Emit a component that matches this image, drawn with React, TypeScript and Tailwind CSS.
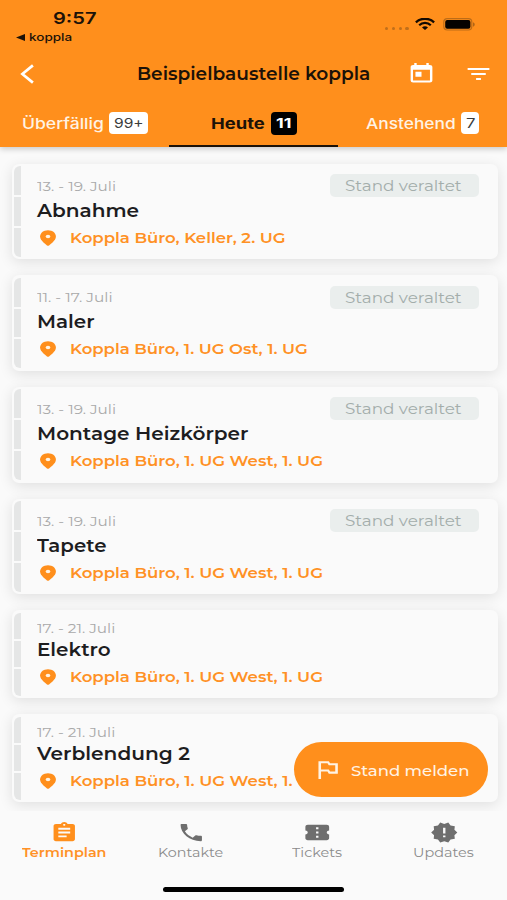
import { useLayoutEffect, useRef, type ReactNode } from "react";
import {
  MdAssignment,
  MdConfirmationNumber,
  MdFilterList,
  MdNewReleases,
  MdOutlinedFlag,
  MdPhone,
  MdToday,
} from "react-icons/md";

/** A single line of text, stretched horizontally to fill the width of its box. */
function Line({ children, className }: { children: ReactNode; className: string }) {
  const box = useRef<HTMLSpanElement>(null);
  const text = useRef<HTMLSpanElement>(null);
  useLayoutEffect(() => {
    const fit = () => {
      if (!box.current || !text.current) return;
      const scale = box.current.clientWidth / text.current.offsetWidth;
      text.current.style.transform = `scaleX(${scale})`;
    };
    fit();
    document.fonts.ready.then(fit);
  }, []);
  return (
    <span ref={box} className={`block shrink-0 whitespace-nowrap ${className}`}>
      <span ref={text} className="inline-block origin-left">
        {children}
      </span>
    </span>
  );
}

function Pin() {
  return (
    <svg className="h-[16px] w-[16px] shrink-0" viewBox="0 0 16 16" fill="none">
      <path
        d="M8 .2C3.300.2.100 3 .100 6.600c0 2.200 1.300 3.900 3.200 5.600l3.700 3.300q1 .7 2 0l3.700-3.300c1.900-1.700 3.200-3.400 3.200-5.600C15.900 3 12.700.2 8 .2Z"
        fill="#ff8f1c"
      />
      <ellipse cx="8" cy="6.500" rx="2.300" ry="1.700" fill="#fff3e2" />
    </svg>
  );
}

type Task = {
  date: string;
  dateWidth: string;
  title: string;
  titleWidth: string;
  place: string;
  placeWidth: string;
  outdated: boolean;
};

const west = { place: "Koppla Büro, 1. UG West, 1. UG", placeWidth: "w-[253px]" };
const mid = { date: "13. - 19. Juli", dateWidth: "w-[79px]" };
const late = { date: "17. - 21. Juli", dateWidth: "w-[78px]", outdated: false };

const tasks: Task[] = [
  { ...mid, title: "Abnahme", titleWidth: "w-[102px]", place: "Koppla Büro, Keller, 2. UG", placeWidth: "w-[215px]", outdated: true },
  { date: "11. - 17. Juli", dateWidth: "w-[75px]", title: "Maler", titleWidth: "w-[58px]", place: "Koppla Büro, 1. UG Ost, 1. UG", placeWidth: "w-[238px]", outdated: true },
  { ...mid, title: "Montage Heizkörper", titleWidth: "w-[212px]", ...west, outdated: true },
  { ...mid, title: "Tapete", titleWidth: "w-[70px]", ...west, outdated: true },
  { ...late, title: "Elektro", titleWidth: "w-[74px]", ...west },
  { ...late, title: "Verblendung 2", titleWidth: "w-[153px]", ...west },
];

function Card({ task }: { task: Task }) {
  const tall = task.outdated;
  return (
    <article
      className={`flex shrink-0 rounded-[7px] bg-[#fafafa] shadow-[0_3px_14px_rgba(0,0,0,0.11)] ${
        tall ? "h-[95.7px]" : "h-[88px]"
      }`}
    >
      <div className="my-[2.500px] ml-[2px] flex w-[7px] flex-col gap-[2px] overflow-hidden rounded-l-[6px]">
        <i className="flex-1 bg-[#e5e6e6]" />
        <i className="flex-1 bg-[#e5e6e6]" />
        <i className="flex-1 bg-[#e5e6e6]" />
      </div>
      <div className={`ml-[15.500px] flex flex-1 flex-col ${tall ? "pt-[12.300px]" : "pt-[8px]"}`}>
        <Line className={`h-[20px] text-[13.500px] leading-[20px] text-[#a9a9a9] ${task.dateWidth}`}>{task.date}</Line>
        <Line
          className={`h-[24px] text-[17.500px] leading-[24px] font-semibold text-[#1d1d1f] ${
            tall ? "mt-[3px]" : "-mt-[0.500px]"
          } ${task.titleWidth}`}
        >
          {task.title}
        </Line>
        <div className="mt-[5px] ml-[3.500px] flex h-[20px] items-center gap-[13.500px]">
          <Pin />
          <Line className={`text-[14px] leading-[20px] font-semibold text-[#ff9125] ${task.placeWidth}`}>
            {task.place}
          </Line>
        </div>
      </div>
      {tall && (
        <div className="mt-[10.500px] mr-[19px] -ml-[200px] flex h-[23px] w-[149px] items-center rounded-[5px] bg-[#eaeeed] pl-[15px]">
          <Line className="mt-px w-[117px] text-[14.500px] leading-[22px] text-[#a3adab]">Stand veraltet</Line>
        </div>
      )}
    </article>
  );
}

function Header() {
  return (
    <header className="relative z-10 flex h-[147px] shrink-0 flex-col bg-[#ff8f1c] text-[#1c1208] shadow-[0_2px_6px_rgba(0,0,0,0.2)]">
      <div className="flex h-[30px] items-start pt-[8px] font-['Inter',sans-serif]">
        <Line className="ml-[53px] w-[44px] text-[16px] leading-[21px] font-semibold">9:57</Line>
        <div className="mt-[19px] ml-[288px] flex gap-[3.400px]">
          <i className="size-[3.400px] rounded-full bg-[#c06f1b]" />
          <i className="size-[3.400px] rounded-full bg-[#c06f1b]" />
          <i className="size-[3.400px] rounded-full bg-[#c06f1b]" />
          <i className="size-[3.400px] rounded-full bg-[#c06f1b]" />
        </div>
        <svg className="mt-[10px] ml-[6px] h-[12px] w-[20px]" viewBox="0 0 20 12" fill="none" stroke="#120a02">
          <path d="M.9 4.300C5.800-.4 14.200-.4 19.100 4.300" strokeWidth="2.300" />
          <path d="M4.200 7.200c3.200-3.100 8.400-3.100 11.600 0" strokeWidth="2.200" />
          <path d="M7 9.400c1.700-1.500 4.300-1.500 6 0l-3 2.600Z" fill="#120a02" stroke="none" />
        </svg>
        <svg className="mt-[10px] ml-[8px] h-[13px] w-[33px]" viewBox="0 0 33 13" fill="none">
          <rect x=".8" y=".6" width="28" height="11.400" rx="3.500" stroke="#bd6c17" strokeWidth="1.200" />
          <rect x="2.200" y="1.900" width="25.200" height="8.900" rx="2" fill="#050200" />
          <path d="M30 4.300c2.300.8 2.300 3.600 0 4.400Z" fill="#b06517" />
        </svg>
      </div>
      <div className="flex h-[14px] items-center font-['Inter',sans-serif]">
        <svg className="ml-[16px] h-[7px] w-[9px]" viewBox="0 0 9 7">
          <path d="M0 3.500 9 0v7Z" fill="#1c1208" />
        </svg>
        <Line className="ml-[4px] w-[43px] text-[11px] leading-[14px] font-medium">koppla</Line>
      </div>
      <div className="mt-[8px] flex h-[44px] items-center">
        <svg className="ml-[20px] h-[20px] w-[15px]" viewBox="0 0 15 20" fill="none">
          <path d="M12.900 1.400 2.400 10l10.500 8.600" stroke="#fff" strokeWidth="2.700" />
        </svg>
        <Line className="ml-[101.500px] w-[233px] text-[17.500px] leading-[24px] font-semibold">
          Beispielbaustelle koppla
        </Line>
        <MdToday preserveAspectRatio="none" className="ml-[37.500px] h-[23.500px] w-[29px] text-white" />
        <MdFilterList preserveAspectRatio="none" className="ml-[28px] h-[24px] w-[29px] text-white" />
      </div>
      <nav className="mt-[5px] flex flex-1 font-['Inter',sans-serif] text-[15px] leading-[22px]">
        <div className="flex h-[45px] w-[169px] items-center pl-[22px] text-[#fff3e4]">
          <Line className="mt-[2px] w-[82px] font-medium">Überfällig</Line>
          <div className="ml-[5px] flex h-[22.500px] w-[39px] items-center justify-center rounded-[4px] bg-white text-[#3b3b3b]">
            <Line className="w-[30px] text-[13.500px]">99+</Line>
          </div>
        </div>
        <div className="flex h-[46.500px] w-[169px] items-center border-b-[2.500px] border-[#1c1208] pt-[1px] pl-[42px]">
          <Line className="mt-[2px] w-[54px] font-bold">Heute</Line>
          <div className="ml-[6px] flex h-[22.500px] w-[26px] items-center justify-center rounded-[4px] bg-black text-white">
            <Line className="w-[16px] text-[13.500px] font-bold">11</Line>
          </div>
        </div>
        <div className="flex h-[45px] items-center pl-[28px] text-[#fff3e4]">
          <Line className="mt-[2px] w-[90px] font-medium">Anstehend</Line>
          <div className="ml-[5px] flex h-[22.500px] w-[18px] items-center justify-center rounded-[4px] bg-white text-[#3b3b3b]">
            <Line className="w-[9px] text-[13px]">7</Line>
          </div>
        </div>
      </nav>
    </header>
  );
}

function BottomNav() {
  const icon = "h-[23px] w-[28.500px] text-[#6e6e6e]";
  const label = "text-[13px] leading-[16px] text-[#8b8b8b]";
  return (
    <footer className="relative z-10 flex h-[89px] shrink-0 flex-col bg-[#fafafa]">
      <nav className="grid grid-cols-4 pt-[10px] pl-px">
        <div className="flex flex-col items-center">
          <MdAssignment preserveAspectRatio="none" className="h-[23px] w-[28.500px] text-[#ff8f1c]" />
          <Line className="w-[84px] text-[13px] leading-[16px] font-semibold text-[#ff9125]">Terminplan</Line>
        </div>
        <div className="flex flex-col items-center">
          <MdPhone preserveAspectRatio="none" className={icon} />
          <Line className={`w-[65px] ${label}`}>Kontakte</Line>
        </div>
        <div className="flex flex-col items-center">
          <MdConfirmationNumber preserveAspectRatio="none" className={icon} />
          <Line className={`w-[50px] ${label}`}>Tickets</Line>
        </div>
        <div className="flex flex-col items-center">
          <MdNewReleases preserveAspectRatio="none" className={icon} />
          <Line className={`w-[61px] ${label}`}>Updates</Line>
        </div>
      </nav>
      <div className="mx-auto mt-auto mb-[8px] h-[5px] w-[181px] rounded-full bg-black" />
    </footer>
  );
}

export default function App() {
  return (
    <div className="relative flex h-[900px] w-[507px] flex-col overflow-hidden bg-[#fafafa] font-['Montserrat','Inter',sans-serif]">
      <Header />
      <main className="flex min-h-0 flex-1 flex-col gap-[16px] overflow-hidden pt-[16.500px] pr-[9.500px] pl-[12px]">
        {tasks.map((task) => (
          <Card key={task.title} task={task} />
        ))}
      </main>
      <button className="absolute top-[742px] left-[294px] z-20 flex h-[55px] w-[194px] items-center rounded-full bg-[#ff8f1c] text-[#fff3e4]">
        <MdOutlinedFlag preserveAspectRatio="none" className="ml-[18px] h-[25px] w-[31px]" />
        <Line className="mt-[2px] ml-[7.500px] w-[118px] text-left text-[14px] leading-[22px] font-medium">
          Stand melden
        </Line>
      </button>
      <BottomNav />
    </div>
  );
}
